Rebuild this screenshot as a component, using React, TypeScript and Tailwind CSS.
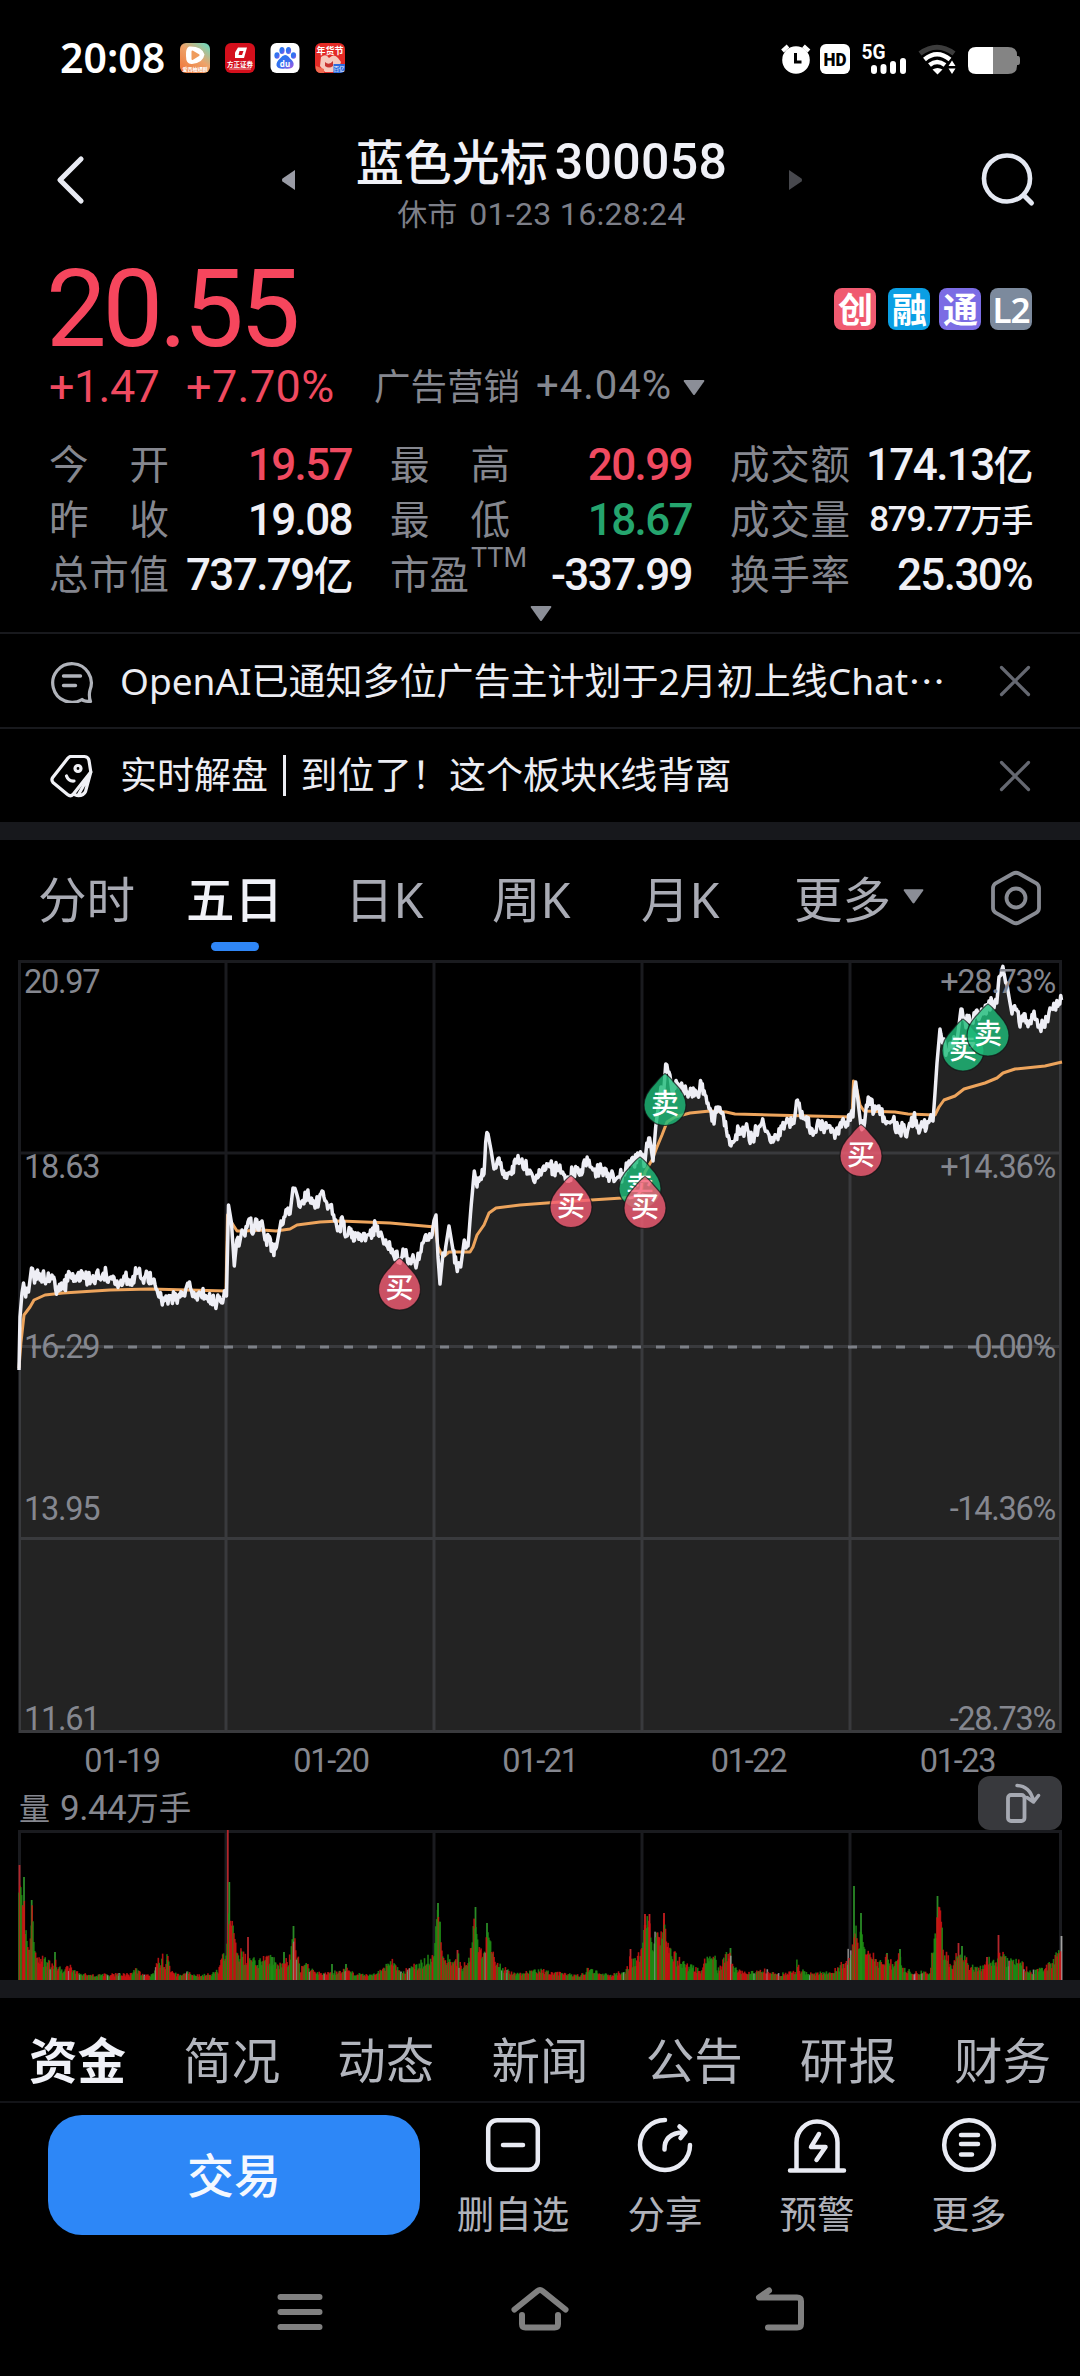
import React from 'react';

type Point = [number, number];

const indexTags = [
  { label: '创', className: 'bg-[#f05a70] ml-0' },
  { label: '融', className: 'bg-[#0a9fe4] ml-[12px]' },
  { label: '通', className: 'bg-[#7b6ce4] ml-[9px]' },
  { label: 'L2', className: 'bg-[#7c8a9d] ml-[9px]' },
];

const stats = [
  [
    { label: ['今', '开'], value: '19.57', tone: 'text-[#f04a60]' },
    { label: ['最', '高'], value: '20.99', tone: 'text-[#f04a60]' },
    { label: ['成', '交', '额'], value: '174.13', unit: '亿', tone: 'text-[#f0f0f6]' },
  ],
  [
    { label: ['昨', '收'], value: '19.08', tone: 'text-[#f0f0f6]' },
    { label: ['最', '低'], value: '18.67', tone: 'text-[#25a56e]' },
    { label: ['成', '交', '量'], value: '879.77', unit: '万手', small: true, tone: 'text-[#f0f0f6]' },
  ],
  [
    { label: ['总', '市', '值'], value: '737.79', unit: '亿', tone: 'text-[#f0f0f6]' },
    { label: ['市', '盈'], sup: 'TTM', value: '-337.99', tone: 'text-[#f0f0f6]' },
    { label: ['换', '手', '率'], value: '25.30%', tone: 'text-[#f0f0f6]' },
  ],
];

const sections = ['资金', '简况', '动态', '新闻', '公告', '研报', '财务'];

const priceKnots: Point[] = [
  [19, 1370], [20, 1317], [22, 1293], [23.5, 1283], [25.7, 1297], [28.5, 1292], [31.5, 1268], [34.6, 1283], [37.5, 1270], [40, 1280],
  [43.5, 1271], [46.5, 1280], [52, 1275], [55.5, 1289], [63.5, 1289], [69.6, 1273], [75.7, 1281], [84, 1276], [92, 1281], [103.5, 1273],
  [111, 1277], [120, 1284], [125, 1279], [131, 1280], [137.5, 1272], [144.6, 1277], [152, 1280], [157, 1290], [161.5, 1300], [164, 1301],
  [168, 1304], [171.5, 1298], [180, 1297], [188.5, 1286], [194.6, 1295], [200, 1293], [205, 1297], [211.5, 1299], [215, 1303], [219.6, 1297],
  [226.5, 1296], [228.5, 1205], [231.5, 1223], [234.3, 1266], [236.8, 1240], [239, 1246], [242, 1230], [245, 1236], [249, 1219], [253.6, 1232],
  [255.7, 1219], [259, 1230], [262, 1221], [265, 1240], [268.6, 1237], [273, 1250], [276.4, 1247], [280, 1227], [284, 1217], [290, 1214],
  [293, 1188], [297, 1195], [301, 1204], [307, 1193], [310.7, 1203], [316, 1206], [322, 1191], [326.8, 1203], [330.4, 1205], [334.6, 1221],
  [338.6, 1227], [343, 1221], [346.4, 1236], [350, 1233], [353.6, 1241], [357, 1234], [362.5, 1237], [369.6, 1235], [375.7, 1226], [380, 1233],
  [385.7, 1240], [393, 1254], [399, 1259], [403, 1249], [409, 1259], [417, 1263], [423, 1243], [428.6, 1240], [433, 1227], [436, 1215],
  [438, 1257], [440, 1284], [443, 1253], [445.7, 1247], [449, 1226], [453, 1250], [456.4, 1265], [460.7, 1267], [464.3, 1240], [468, 1246],
  [471.4, 1203], [474.3, 1171], [477, 1187], [480.4, 1177], [484, 1174], [485.7, 1142], [488, 1134], [491, 1150], [494, 1169], [499, 1158],
  [503.6, 1171], [510.7, 1173], [516, 1163], [522, 1159], [528, 1170], [535.7, 1178], [541, 1175], [548.6, 1164], [554, 1171], [559, 1167],
  [564.6, 1175], [568, 1177], [573.6, 1170], [580.7, 1170], [588, 1163], [593, 1170], [604, 1170], [611, 1177], [617, 1178], [623.6, 1175],
  [629, 1161], [633.6, 1161], [641.4, 1156], [645, 1162], [646.8, 1143], [649.6, 1138], [653, 1161], [655.7, 1127], [657.5, 1113], [661, 1087],
  [663.6, 1093], [665.7, 1064], [668, 1072], [671.8, 1090], [677, 1083], [682.5, 1087], [688, 1097], [691.4, 1089], [696.8, 1095], [701.4, 1084],
  [705, 1095], [708, 1103], [712, 1121], [717, 1112], [723.6, 1117], [726.4, 1130], [730, 1145], [735, 1140], [738.6, 1129], [742, 1133],
  [745.7, 1127], [752, 1141], [756.4, 1130], [763.6, 1124], [768, 1133], [773, 1142], [777, 1135], [786, 1123], [793, 1122], [797.5, 1100],
  [800, 1110], [805.7, 1120], [812, 1129], [820, 1125], [827, 1128], [834, 1132], [841.4, 1127], [846.8, 1122], [848.6, 1115], [853, 1117],
  [854.3, 1090], [855.7, 1082], [857.9, 1100], [861, 1127], [864.6, 1123], [866.4, 1105], [871, 1099], [874, 1112], [879, 1106], [884, 1117],
  [893, 1120], [899, 1133], [903, 1128], [907.5, 1131], [913.6, 1118], [918, 1126], [923.6, 1127], [929, 1122], [933, 1121], [935, 1093],
  [937, 1063], [940, 1029], [942.5, 1043], [946.8, 1050], [952, 1043], [957.5, 1037], [961, 1009], [964, 1020], [968, 1022], [973, 1023],
  [976, 1011], [980.7, 1015], [988, 1007], [993, 1003], [996.8, 1003], [999, 977], [1002, 969], [1005.7, 983], [1009, 997], [1012, 1014],
  [1016.4, 1009], [1020, 1027], [1025, 1014], [1029, 1022], [1033, 1015], [1038, 1027], [1043, 1027], [1046.8, 1017], [1051, 1009],
  [1055.7, 1010], [1059, 1001], [1061.5, 1000],
];

const averageLine: Point[] = [
  [19, 1368], [21, 1342], [24, 1315], [30, 1307], [34, 1300], [45, 1295], [63, 1293], [110, 1290], [150, 1289], [226, 1291],
  [227.5, 1215], [230, 1220], [237, 1231], [245, 1231], [262, 1230], [276, 1231], [290, 1229], [297, 1225], [320, 1222], [340, 1221],
  [390, 1223], [435, 1227], [438, 1247], [443, 1257], [449, 1252], [470, 1252], [473, 1247], [477, 1235], [484, 1225], [489, 1213],
  [496, 1208], [520, 1205], [560, 1202], [622, 1198], [641, 1196], [645, 1172], [652, 1160], [657, 1147], [662, 1135], [667, 1122],
  [675, 1117], [690, 1113], [710, 1111], [726, 1112], [735, 1114], [770, 1115], [852, 1117], [853.5, 1081], [857, 1090], [860, 1105],
  [864, 1111], [895, 1112], [908, 1114], [935, 1115], [939, 1107], [944, 1100], [955, 1096], [964, 1089], [985, 1083], [997, 1078],
  [1003, 1073], [1015, 1069], [1045, 1066], [1062, 1062],
];

// x, peak height
const volumeKnots: Point[] = [
  [19, 90], [20, 115], [22, 80], [24, 103], [25, 62], [27, 40], [29, 32], [32, 80], [34, 45], [36, 26], [39, 22], [45, 17], [50, 14],
  [54, 12], [55, 27], [57, 12], [63, 8], [70, 12], [76, 7], [90, 4], [110, 5], [130, 5], [136, 9], [145, 4], [153, 5], [159, 20], [160, 12],
  [162, 22], [165, 8], [167, 20], [171, 7], [180, 4], [186, 8], [193, 4], [210, 5], [218, 8], [223, 20], [226.5, 32], [229, 80],
  [231, 65], [234, 50], [238, 27], [242, 22], [246, 18], [248, 30], [249, 25], [256, 15], [267, 20], [280, 14], [290, 20],
  [292, 50], [294, 54], [296, 30], [300, 10], [308, 13], [315, 6], [330, 6], [347, 9], [355, 5], [375, 5], [393, 16], [400, 6], [420, 15],
  [430, 20], [434.5, 32], [436, 75], [438, 77], [440, 60], [442, 35], [446, 20], [455, 15], [458, 20], [462, 11], [469, 20], [474, 62],
  [475.5, 73], [477, 42], [482, 30], [485, 33], [487, 57], [490, 45], [493, 22], [500, 12], [515, 5], [540, 9], [560, 6], [580, 4], [587, 9],
  [610, 4], [625, 8], [629, 12], [630, 30], [632, 18], [638, 18], [642, 38], [645, 66], [650, 64], [652, 34], [656, 55], [660, 45], [664, 67],
  [668, 40], [674, 22], [682, 14], [690, 12], [700, 8], [708, 24], [714, 27], [717, 8], [725, 20], [730, 32], [733, 10], [745, 6], [763, 9],
  [780, 5], [796, 8], [797, 19], [800, 8], [815, 6], [835, 9], [845, 16], [850, 28], [852.5, 40], [855, 60], [856, 55], [859, 35], [861, 60],
  [864, 35], [870, 28], [880, 14], [887, 20], [893, 12], [900, 22], [903, 9], [930, 6], [934, 45], [936, 55], [937.5, 84], [941, 68], [944, 26],
  [952, 13], [958, 28], [963, 28], [970, 11], [985, 12], [990, 20], [997, 14], [998.5, 34], [1001, 26], [1008, 16], [1021, 15], [1030, 7],
  [1045, 10], [1055, 18], [1059, 32], [1061.5, 43],
];

// single minutes that stand out above the rest
const volumeSpikes = [
  { x: 19.5, h: 115, color: '#b3262c' },
  { x: 24, h: 103, color: '#2a8a26' },
  { x: 31.7, h: 80, color: '#2a8a26' },
  { x: 55, h: 28, color: '#2a8a26' },
  { x: 167.5, h: 20, color: '#2a8a26' },
  { x: 227.8, h: 150, color: '#b3262c' },
  { x: 229.3, h: 98, color: '#2a8a26' },
  { x: 248, h: 43, color: '#b3262c' },
  { x: 267, h: 23, color: '#2a8a26' },
  { x: 272, h: 23, color: '#2a8a26' },
  { x: 284, h: 28, color: '#2a8a26' },
  { x: 293.5, h: 54, color: '#2a8a26' },
  { x: 332, h: 16, color: '#2a8a26' },
  { x: 346, h: 16, color: '#2a8a26' },
  { x: 438, h: 77, color: '#2a8a26' },
  { x: 457.5, h: 30, color: '#b3262c' },
  { x: 475.5, h: 73, color: '#2a8a26' },
  { x: 487, h: 57, color: '#2a8a26' },
  { x: 630.5, h: 31, color: '#b3262c' },
  { x: 645, h: 66, color: '#c41d20' },
  { x: 649.5, h: 66, color: '#c41d20' },
  { x: 664, h: 67, color: '#c41d20' },
  { x: 730.5, h: 32, color: '#2a8a26' },
  { x: 854, h: 94, color: '#2a8a26' },
  { x: 861, h: 67, color: '#2a8a26' },
  { x: 887, h: 27, color: '#2a8a26' },
  { x: 900, h: 31, color: '#2a8a26' },
  { x: 937.5, h: 84, color: '#2a8a26' },
  { x: 958.5, h: 37, color: '#b3262c' },
  { x: 962, h: 34, color: '#2a8a26' },
  { x: 987, h: 23, color: '#b3262c' },
  { x: 998.5, h: 45, color: '#b3262c' },
  { x: 1061.5, h: 44, color: '#a3a3a3' },
];

const drops = [
  { x: 399.5, y: 1258, side: 'buy' },
  { x: 571, y: 1175.5, side: 'buy' },
  { x: 640, y: 1157, side: 'sell' },
  { x: 645, y: 1176.5, side: 'buy' },
  { x: 665, y: 1073.5, side: 'sell' },
  { x: 861, y: 1124.5, side: 'buy' },
  { x: 963, y: 1019, side: 'sell' },
  { x: 988, y: 1004, side: 'sell' },
];

const leftAxis: [string, number][] = [['20.97', 992.5], ['18.63', 1177.5], ['16.29', 1358], ['13.95', 1519.5], ['11.61', 1729.5]];
const rightAxis: [string, number][] = [['+28.73%', 992.5], ['+14.36%', 1177.5], ['0.00%', 1358], ['-14.36%', 1519.5], ['-28.73%', 1729.5]];
const dates: [string, number][] = [['01-19', 122], ['01-20', 331], ['01-21', 540], ['01-22', 748.5], ['01-23', 957.5]];

function seeded(seed: number) {
  let s = seed;
  return () => {
    s = (s * 16807) % 2147483647;
    return s / 2147483647;
  };
}

function lerpAt(knots: Point[], x: number) {
  let i = 1;
  while (i < knots.length - 1 && knots[i][0] < x) i++;
  const [x0, y0] = knots[i - 1];
  const [x1, y1] = knots[i];
  return y0 + ((y1 - y0) * (x - x0)) / (x1 - x0);
}

function buildPrice() {
  const rand = seeded(77);
  const out: Point[] = [];
  for (let i = 1; i < priceKnots.length; i++) {
    const [x0, y0] = priceKnots[i - 1];
    const [x1, y1] = priceKnots[i];
    const n = Math.max(1, Math.round((x1 - x0) / 0.95));
    const steep = Math.abs(y1 - y0) / (x1 - x0) > 5;
    for (let k = 0; k < n; k++) {
      const jitter = steep || k === 0 ? 0 : (rand() - 0.5) * 14;
      out.push([x0 + ((x1 - x0) * k) / n, y0 + ((y1 - y0) * k) / n + jitter]);
    }
  }
  out.push(priceKnots[priceKnots.length - 1]);
  return out;
}

function buildVolume() {
  const rand = seeded(4211);
  const bars: { x: number; h: number; color: string }[] = [];
  let rising = true;
  for (let x = 19; x <= 1061; x += 0.87) {
    if (rand() < 0.5) rising = !rising;
    const peak = lerpAt(volumeKnots, x);
    const h = peak > 24 ? peak * (0.7 + rand() * 0.3) : peak * (0.7 + rand() * 0.7);
    const flat = rand() < 0.03;
    bars.push({ x, h: Math.max(3, h), color: flat ? '#9a9a9a' : rising ? '#cf1414' : '#1e8f14' });
  }
  return bars;
}

const toPath = (pts: Point[]) => pts.map(([x, y], i) => `${i ? 'L' : 'M'}${x.toFixed(1)} ${y.toFixed(1)}`).join('');

const pricePath = toPath(buildPrice());
const volumeBars = buildVolume();

const Caret: React.FC<{ className?: string }> = ({ className }) => (
  <svg viewBox="0 0 22 15" className={className ?? 'h-[15px] w-[22px]'}>
    <path d="M1.5 0h19q1.3.3.6 1.6l-9.2 12.8q-.9 1-1.8 0L.9 1.6Q.3.3 1.5 0Z" fill="#8b8e97" />
  </svg>
);

const StatusBar: React.FC = () => (
  <div className="flex h-[116px] items-center justify-between pl-[60px] pr-[58px]">
    <div className="flex items-center">
      <span className="w-[104px] pb-px font-['Noto_Sans'] text-[41px] font-semibold leading-none text-white">20:08</span>
      <svg viewBox="0 0 165 30" className="ml-[16px] h-[30px] w-[165px]">
        <defs>
          <linearGradient id="player" x1="1" y1="0" x2="0.2" y2="1">
            <stop offset="0" stopColor="#5fe0c8" />
            <stop offset="0.5" stopColor="#eda36a" />
            <stop offset="1" stopColor="#f07a3c" />
          </linearGradient>
          <linearGradient id="paw" x1="0" y1="0" x2="1" y2="1">
            <stop offset="0" stopColor="#1f7cf0" />
            <stop offset="0.6" stopColor="#3f6cf0" />
            <stop offset="1" stopColor="#b35ce0" />
          </linearGradient>
        </defs>
        <rect width="30" height="30" rx="6" fill="url(#player)" />
        <path d="M9 3.500Q22 3 24.500 11.500 23 20 12 21Q6 21.500 6 13 5.500 5 9 3.500Z" fill="#fff" />
        <path d="M12.500 8.500L18.500 12.200 12.500 16Z" fill="#ef9c5c" stroke="#ef9c5c" strokeWidth="2" strokeLinejoin="round" />
        <text x="15" y="28" textAnchor="middle" fontSize="5" fontWeight="700" fill="#fff">爱西柚短剧</text>

        <rect x="45" width="30" height="30" rx="6" fill="#d40f1c" />
        <path d="M58 4.500h9l-3 10.500h-9v-5.500Z" fill="#fff" />
        <path d="M59.500 8h4l-1.500 4h-3.500Z" fill="#d40f1c" />
        <text x="60" y="24" textAnchor="middle" fontSize="6.500" fontWeight="700" fill="#fff">方正证券</text>
        <rect x="49" y="25.500" width="22" height="1" fill="#f3a0a0" />

        <rect x="90.500" width="29" height="30" rx="6" fill="#fff" />
        <g fill="url(#paw)">
          <ellipse cx="97" cy="12.500" rx="2.600" ry="3.300" />
          <ellipse cx="102" cy="7.500" rx="2.600" ry="3.500" />
          <ellipse cx="108.500" cy="7.500" rx="2.600" ry="3.500" />
          <ellipse cx="113.500" cy="12.500" rx="2.600" ry="3.300" />
          <path d="M105 12Q108 12 110 15.500 114.500 19 113.500 22.500 112 26.500 105 25.500 98 26.500 96.500 22.500 96 19 100 15.500 102.500 12 105 12Z" />
        </g>
        <text x="105" y="23.500" textAnchor="middle" fontSize="8" fontWeight="700" fill="#fff">du</text>

        <rect x="135" width="30" height="30" rx="6" fill="#e32a26" />
        <text x="150" y="10.500" textAnchor="middle" fontSize="9" fontWeight="700" fill="#fff">年货节</text>
        <path d="M141 14q5-4 8 1 5-5 9 0l3 4-2 6-6 4h-8l-5-6Z" fill="#f6c9bd" />
        <path d="M145 19q4 4 8-1v5q-4 3-8 0Z" fill="#c83430" />
        <path d="M136 23l8 3v4h-4q-4-1-4-4Z" fill="#ef6a50" />
        <path d="M153.500 21H165v5q-.5 4-5 4h-6.500Z" fill="#2c6ae0" />
        <text x="159" y="28" textAnchor="middle" fontSize="5.500" fill="#fff">百亿</text>
      </svg>
    </div>
    <svg viewBox="0 0 242 34" className="mb-[-1px] h-[34px] w-[242px] overflow-visible font-[Roboto]">
      <circle cx="16" cy="18" r="13.800" fill="#fff" />
      <path d="M2.500 9L8 4M29 9l-5.500-5" stroke="#fff" strokeWidth="4" />
      <path d="M15.500 11v9h6" fill="none" stroke="#000" strokeWidth="3" />
      <rect x="40" y="2" width="30" height="30" rx="6" fill="#fff" />
      <text x="43.500" y="24" fontSize="19" fontWeight="900" fill="#000" textLength="23" lengthAdjust="spacingAndGlyphs">HD</text>
      <text x="81.500" y="16.500" fontSize="20" fontWeight="700" fill="#fff" textLength="24" lengthAdjust="spacingAndGlyphs">5G</text>
      <path d="M94 26v3M103.500 25v4M113 22v7M123 19v10" stroke="#fff" strokeWidth="6" strokeLinecap="round" />
      <path d="M140 11.500Q157 -1 174 11.500" fill="none" stroke="#3c3c3c" strokeWidth="5" />
      <path d="M144.500 17.500Q157 7 170 17.500M149.500 23Q157 17 165 23" fill="none" stroke="#fff" strokeWidth="4.500" />
      <path d="M152.500 27.500q5-3 10 0l-5 5Z" fill="#fff" />
      <path d="M168.500 24l3.500-5.500 3.500 5.500ZM168.500 26.500l3.500 5.500 3.500-5.500Z" fill="#fff" />
      <path d="M213 5h15q9 0 9 8v11q0 8-9 8h-15Z" fill="#848484" />
      <path d="M236 14h2q2 0 2 3v3q0 3-2 3h-2Z" fill="#848484" />
      <path d="M213 5h-17q-8 0-8 8v11q0 8 8 8h17Z" fill="#fff" />
    </svg>
  </div>
);

const Header: React.FC = () => (
  <div className="flex h-[134px] items-start justify-between px-[44px]">
    <svg viewBox="0 0 60 60" className="mt-[33px] h-[60px] w-[60px]">
      <path d="M37 10L16 31l21 21" fill="none" stroke="#e8eaf2" strokeWidth="5.200" strokeLinecap="round" strokeLinejoin="round" />
    </svg>
    <div className="flex items-start">
      <svg viewBox="0 0 14 22" className="mr-[61px] mt-[53px] h-[22px] w-[14px]">
        <path d="M13 1v20L.5 12.500q-1-1.500 0-3Z" fill="#9a9ca6" />
      </svg>
      <div className="flex w-[370px] flex-col items-center">
        <div className="mt-[18px] flex h-[56px] items-center whitespace-nowrap leading-none text-[#f0f1f7]">
          <span className="text-[48px] font-medium">蓝色光标</span>
          <span className="ml-[7px] font-[Roboto] text-[50px] font-medium tracking-[0.3px]">300058</span>
        </div>
        <div className="mt-[8px] flex h-[32px] items-center whitespace-nowrap leading-none text-[#7d7f88]">
          <span className="text-[30px]">休市</span>
          <span className="ml-[12px] font-[Roboto] text-[32px] tracking-[0.3px]">01-23 16:28:24</span>
        </div>
      </div>
      <svg viewBox="0 0 14 22" className="ml-[61px] mt-[53px] h-[22px] w-[14px]">
        <path d="M1 1v20l12.500-8.500q1-1.500 0-3Z" fill="#47484d" />
      </svg>
    </div>
    <svg viewBox="0 0 60 60" className="mr-[-3px] mt-[33px] h-[60px] w-[60px]">
      <circle cx="28" cy="29.500" r="23" fill="none" stroke="#e4e8f2" strokeWidth="4.600" />
      <path d="M45 46.500l7.500 7.500" stroke="#e4e8f2" strokeWidth="5" strokeLinecap="round" />
    </svg>
  </div>
);

const Quote: React.FC = () => (
  <div className="h-[382px] pl-[49px] pr-[48px]">
    <div className="flex h-[118px] items-center justify-between">
      <span className="ml-[-3px] font-[Roboto] text-[108px] leading-none tracking-[-4.2px] text-[#f6465d]">20.55</span>
      <div className="flex">
        {indexTags.map((tag) => (
          <span
            key={tag.label}
            className={`flex h-[42px] w-[42px] items-center justify-center rounded-[8px] text-[35px] font-semibold leading-none tracking-[-1px] text-white ${tag.className}`}
          >
            {tag.label}
          </span>
        ))}
      </div>
    </div>
    <div className="flex h-[36px] items-center whitespace-nowrap font-[Roboto] leading-none">
      <span className="w-[137px] text-[45px] tracking-[-0.6px] text-[#f04a60]">+1.47</span>
      <span className="w-[188px] text-[45px] tracking-[0.4px] text-[#f04a60]">+7.70%</span>
      <span className="w-[162px] font-['Noto_Sans','Noto_Sans_CJK_SC'] text-[36.500px] text-[#85878f]">广告营销</span>
      <span className="text-[40px] tracking-[1px] text-[#85878f]">+4.04%</span>
      <Caret className="ml-[11px] mt-[2px] h-[15px] w-[22px]" />
    </div>
    <div className="mt-[33px] grid grid-cols-[303px_302px_302px] justify-between">
      {stats.flat().map((cell) => (
        <div key={cell.value} className="flex h-[55px] items-center justify-between">
          <span className="flex h-[55px] w-[120px] shrink-0 items-center justify-between text-[39.500px] leading-none text-[#85878f]">
            {cell.sup ? (
              <>
                <span className="shrink-0">{cell.label.join('')}</span>
                <span className="mb-[32px] ml-[2px] font-[Roboto] text-[27px] leading-none">{cell.sup}</span>
              </>
            ) : (
              cell.label.map((ch) => <span key={ch}>{ch}</span>)
            )}
          </span>
          <span
            className={`flex items-center whitespace-nowrap font-medium leading-none ${cell.tone} ${
              cell.small ? 'text-[35px] tracking-[-1.3px]' : 'text-[44px] tracking-[-1.6px]'
            }`}
          >
            <span className="font-[Roboto]">{cell.value}</span>
            {cell.unit && <span className={cell.small ? 'text-[32px]' : 'text-[40px]'}>{cell.unit}</span>}
          </span>
        </div>
      ))}
    </div>
    <div className="flex justify-center pt-[4px]">
      <Caret />
    </div>
  </div>
);

const CloseIcon: React.FC = () => (
  <svg viewBox="0 0 32 32" className="h-[32px] w-[32px]">
    <path d="M2.500 2.500l27 27M29.500 2.500l-27 27" stroke="#656871" strokeWidth="3.200" strokeLinecap="round" />
  </svg>
);

const NewsRow: React.FC<{ icon: React.ReactNode; children: React.ReactNode }> = ({ icon, children }) => (
  <div className="flex h-[95px] items-center border-t-2 border-[#18191d] pl-[50px] pr-[49px]">
    {icon}
    <p className="ml-[26px] flex flex-1 items-center whitespace-nowrap text-[37px] leading-none text-[#ecedf3]">{children}</p>
    <CloseIcon />
  </div>
);

const News: React.FC = () => (
  <>
    <NewsRow
      icon={
        <svg viewBox="0 0 44 44" className="h-[44px] w-[44px]">
          <path
            d="M40.500 42.500Q34 42.500 32 40.500A19.300 19.300 0 1 1 40 31Q38.500 37 40.500 42.500Z"
            fill="none"
            stroke="#b0b3ba"
            strokeWidth="3.200"
            strokeLinejoin="round"
          />
          <path d="M13.500 17h17M13.500 26.500h12" stroke="#b0b3ba" strokeWidth="3.400" strokeLinecap="round" />
        </svg>
      }
    >
      <span>OpenAI</span>已通知多位广告主计划于2月初上线<span>Chat</span>
      <span className="font-['Noto_Sans_CJK_SC']">…</span>
    </NewsRow>
    <NewsRow
      icon={
        <svg viewBox="0 0 44 44" className="h-[44px] w-[44px]">
          <g fill="none" stroke="#f0f1f6" strokeWidth="3.200" strokeLinejoin="round" strokeLinecap="round">
            <path d="M20 2.500H34.500Q38.500 3 39 6.500L40.800 18 23 40.500Q20.500 43 17.500 40.500L3 28.500Q1 26 2.700 23.500L18 4Z" />
            <path d="M40.800 18L35.500 37.500Q33.500 42 27 41.500L24.500 40.500M39 22L28.500 40.500" />
            <circle cx="28" cy="14.500" r="3" />
            <path d="M16.500 22q2 5.500 7.500 5" />
          </g>
        </svg>
      }
    >
      <span className="pb-[2px]">实时解盘</span>
      <span className="mx-[15px] h-[41px] w-[2.500px] bg-[#ecedf3]" />
      <span className="pb-[2px] tracking-[0.1px]">到位了！这个板块K线背离</span>
    </NewsRow>
  </>
);

const PeriodTabs: React.FC = () => (
  <div className="flex h-[118px] items-start pl-[38px] text-[48.500px] leading-none text-[#a9abb4]">
    <div className="flex w-[148px] pt-[35px]">分时</div>
    <div className="flex w-[159px] flex-col pt-[35px] font-medium text-[#f0f1f7]">
      五日
      <span className="ml-[25px] mt-[18px] h-[9px] w-[48px] rounded-full bg-[#2f86f6]" />
    </div>
    <div className="w-[147px] pt-[35px]">日K</div>
    <div className="w-[149px] pt-[35px]">周K</div>
    <div className="w-[153px] pt-[35px]">月K</div>
    <div className="flex w-[195px] items-start pt-[35px]">
      更多
      <Caret className="ml-[12px] mt-[14px] h-[15px] w-[21px]" />
    </div>
    <svg viewBox="0 0 54 56" className="mt-[30px] h-[56px] w-[54px]">
      <path
        d="M24 3.500Q27 2 30 3.500L47 13Q50 15 50 18V38Q50 41 47 43L30 52.500Q27 54 24 52.500L7 43Q4 41 4 38V18Q4 15 7 13Z"
        fill="none"
        stroke="#888b93"
        strokeWidth="3.800"
      />
      <circle cx="27" cy="28" r="9.500" fill="none" stroke="#888b93" strokeWidth="3.800" />
    </svg>
  </div>
);

const Drop: React.FC<{ x: number; y: number; side: string }> = ({ x, y, side }) => (
  <g transform={`translate(${x} ${y})`}>
    <path
      d="M0 0Q3.500 2 10 10Q21 21 21 31.500A21 20.500 0 0 1 -21 31.500Q-21 21 -10 10Q-3.500 2 0 0Z"
      fill={side === 'buy' ? '#f35c74' : '#1fbd7a'}
      fillOpacity="0.81"
      stroke="#101112"
      strokeOpacity="0.7"
      strokeWidth="1.200"
    />
    <text x="0" y="40" textAnchor="middle" fontSize="28" fontWeight="500" fill="#fff">
      {side === 'buy' ? '买' : '卖'}
    </text>
  </g>
);

const PriceChart: React.FC = () => (
  <svg viewBox="0 958 1080 822" className="block h-[822px] w-[1080px] shrink-0">
    <g stroke="#1a1b1f" fill="none">
      <rect x="19.500" y="961.500" width="1041" height="770" strokeWidth="3" />
      <path d="M226 960V1732M434 960V1732M642 960V1732M850 960V1732" strokeWidth="3" />
      <path d="M18 1153H1061M18 1346.500H1061M18 1538.500H1061" strokeWidth="3" />
    </g>
    <path d={`${pricePath}V1733H19Z`} fill="#fff" fillOpacity="0.137" />
    <path d="M20 1347H1058" stroke="#7d8087" strokeWidth="3" strokeDasharray="9 15" strokeDashoffset="-12" />
    <path d={toPath(averageLine)} fill="none" stroke="#eda45c" strokeWidth="3" strokeLinejoin="round" />
    <path d={pricePath} fill="none" stroke="#eeeef5" strokeWidth="3.500" strokeLinejoin="round" />
    <g className="font-[Roboto]" fontSize="32.500" letterSpacing="-1.300" fill="#85878f">
      {leftAxis.map(([label, y]) => (
        <text key={label} x="24" y={y}>{label}</text>
      ))}
      {rightAxis.map(([label, y]) => (
        <text key={label} x="1055" y={y} textAnchor="end">{label}</text>
      ))}
      {dates.map(([label, x]) => (
        <text key={label} x={x} y="1771.500" textAnchor="middle">{label}</text>
      ))}
    </g>
    {drops.map((d) => (
      <Drop key={d.x} {...d} />
    ))}
  </svg>
);

const VolumeChart: React.FC = () => (
  <>
    <div className="mt-[-4px] flex h-[54px] shrink-0 items-center justify-between pl-[19px] pr-[18px]">
      <span className="mt-[10px] flex items-center leading-none text-[#85878f]">
        <span className="text-[31px]">量</span>
        <span className="ml-[10px] font-[Roboto] text-[35px] tracking-[-0.5px]">9.44</span>
        <span className="text-[32.500px]">万手</span>
      </span>
      <span className="flex h-[54px] w-[84px] items-center justify-center rounded-[12px] bg-[#38393d]">
        <svg viewBox="0 0 84 54" className="h-[54px] w-[84px]" fill="none" stroke="#a6a9b2" strokeLinecap="round" strokeLinejoin="round">
          <rect x="30" y="19" width="16.500" height="26" rx="3" strokeWidth="3.800" />
          <path d="M39 9.500Q52 10 55.500 25M55.500 26L49 21.500M55.500 26L60.500 19.500" strokeWidth="3.500" />
        </svg>
      </span>
    </div>
    <svg viewBox="0 1830 1080 150" className="block h-[150px] w-[1080px] shrink-0">
      <path d="M18 1831.500H1062M19.500 1830V1980M226 1830V1980M434 1830V1980M642 1830V1980M850 1830V1980M1060.500 1830V1980" stroke="#1a1b1f" strokeWidth="3" />
      {volumeSpikes.map((bar) => (
        <rect key={bar.x} x={bar.x - 0.9} y={1980 - bar.h} width="1.800" height={bar.h} fill={bar.color} />
      ))}
      {volumeBars.map((bar) => (
        <rect key={bar.x} x={bar.x - 0.7} y={1980 - bar.h} width="1.600" height={bar.h} fill={bar.color} fillOpacity="0.85" />
      ))}
    </svg>
  </>
);

const SectionTabs: React.FC = () => (
  <div className="flex h-[105px] shrink-0 items-center justify-between border-b-2 border-[#131418] px-[29px] pt-[22px] text-[48.500px] leading-none text-[#b2b5bd]">
    {sections.map((name, index) => (
      <span key={name} className={index === 0 ? 'font-bold text-[#f0f1f7]' : ''}>
        {name}
      </span>
    ))}
  </div>
);

const Action: React.FC<{ label: string; children: React.ReactNode }> = ({ label, children }) => (
  <div className="flex flex-col items-center">
    <svg viewBox="0 0 60 60" className="h-[60px] w-[60px]" fill="none" stroke="#e9ebf3" strokeWidth="4.500" strokeLinecap="round" strokeLinejoin="round">
      {children}
    </svg>
    <span className="mt-[20px] whitespace-nowrap text-[37.500px] leading-none text-[#b0b2ba]">{label}</span>
  </div>
);

const ActionBar: React.FC = () => (
  <div className="flex h-[146px] shrink-0 items-start pl-[48px] pt-[12px]">
    <button className="flex h-[120px] w-[372px] items-center justify-center rounded-[34px] bg-[#2d87f7] text-[47px] font-medium leading-none text-[#f4f8ff]">
      交易
    </button>
    <div className="ml-[17px] grid grid-cols-[152px_152px_152px_152px]">
      <Action label="删自选">
        <rect x="5.200" y="5.200" width="49.600" height="49.600" rx="9" />
        <path d="M20 30h20" />
      </Action>
      <Action label="分享">
        <path d="M30 5A25 25 0 1 0 55 30M29.500 34.500Q29 18.500 49 17M44.500 11.500L50.500 16.800 45.500 23" />
      </Action>
      <Action label="预警">
        <path d="M3 55.500H57M9.500 55V27.500A20.500 21 0 0 1 50.500 27.500V55M32 19L24 32H38.500L29.500 45" />
      </Action>
      <Action label="更多">
        <circle cx="30" cy="30" r="24.800" />
        <path d="M22 20h17M22 29h17M22 39.500h11" />
      </Action>
    </div>
  </div>
);

const SystemNav: React.FC = () => (
  <div className="flex h-[127px] shrink-0 items-start pl-[270px] pt-[28px]">
    <svg viewBox="0 0 60 60" className="h-[60px] w-[60px]" stroke="#808080" strokeWidth="6" strokeLinecap="round">
      <path d="M10.500 20H49.500M10.500 35H49.500M10.500 50H49.500" />
    </svg>
    <svg viewBox="0 0 60 60" className="ml-[180px] h-[60px] w-[60px]" fill="none" stroke="#808080" strokeWidth="6" strokeLinecap="round" strokeLinejoin="round">
      <path d="M4.500 32.500L27.500 14Q30 12 32.500 14L55.500 32.500M12 38V47Q12 50.500 15.500 50.500H44.500Q48 50.500 48 47V38" />
    </svg>
    <svg viewBox="0 0 60 60" className="ml-[180px] h-[60px] w-[60px]" fill="none" stroke="#808080" strokeWidth="6" strokeLinecap="round" strokeLinejoin="round">
      <path d="M19 13.500L9 20.500H47Q51 20.500 51 24V47Q51 50.500 47 50.500H18" />
    </svg>
  </div>
);

const App: React.FC = () => (
  <div className="flex h-[2376px] w-[1080px] flex-col overflow-hidden bg-black font-['Noto_Sans','Noto_Sans_CJK_SC',sans-serif]">
    <StatusBar />
    <Header />
    <Quote />
    <News />
    <div className="h-[18px] shrink-0 bg-[#17181c]" />
    <PeriodTabs />
    <PriceChart />
    <VolumeChart />
    <div className="h-[18px] shrink-0 bg-[#17181c]" />
    <SectionTabs />
    <ActionBar />
    <SystemNav />
  </div>
);

export default App;
